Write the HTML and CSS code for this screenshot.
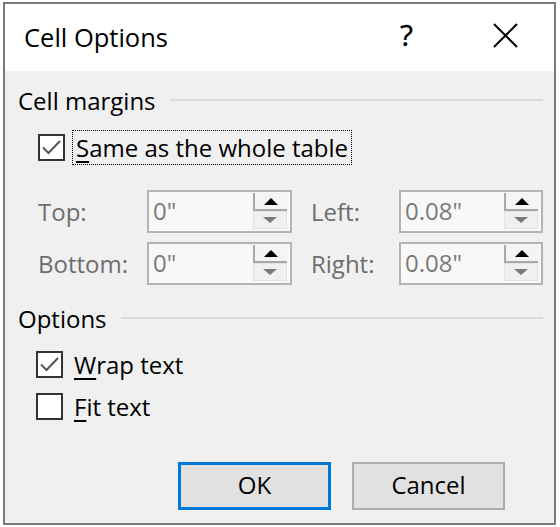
FILE: index.html
```html
<!DOCTYPE html>
<html>
<head>
<meta charset="utf-8">
<link rel="stylesheet" href="styles.css">
</head>
<body>
<div class="window">
  <div class="titlebar">
    <span class="title">Cell Options</span>
    <span class="help">?</span>
    <span class="close">
      <svg width="25" height="25" viewBox="0 0 25 25"><path d="M1 1 L24 24 M24 1 L1 24" stroke="#000" stroke-width="2" fill="none"/></svg>
    </span>
  </div>
  <div class="content">
    <div class="group-head"><span>Cell margins</span><div class="rule"></div></div>
    <div class="check-row first">
      <span class="box"><svg width="23" height="23" viewBox="0 0 23 23"><path d="M3 11.5 L8.5 17 L20 5" stroke="#555" stroke-width="2" fill="none"/></svg></span>
      <span class="check-label focus"><u>S</u>ame as the whole table</span>
    </div>
    <div class="spin-grid">
      <span class="lbl">Top:</span>
      <div class="spin"><span class="val">0"</span><div class="btns"><div class="up"><span class="tri-up"></span></div><div class="down"><span class="tri-down"></span></div></div></div>
      <span class="lbl lbl2">Left:</span>
      <div class="spin"><span class="val">0.08"</span><div class="btns"><div class="up"><span class="tri-up"></span></div><div class="down"><span class="tri-down"></span></div></div></div>
      <span class="lbl">Bottom:</span>
      <div class="spin"><span class="val">0"</span><div class="btns"><div class="up"><span class="tri-up"></span></div><div class="down"><span class="tri-down"></span></div></div></div>
      <span class="lbl lbl2">Right:</span>
      <div class="spin"><span class="val">0.08"</span><div class="btns"><div class="up"><span class="tri-up"></span></div><div class="down"><span class="tri-down"></span></div></div></div>
    </div>
    <div class="group-head second"><span>Options</span><div class="rule"></div></div>
    <div class="check-row wrap">
      <span class="box"><svg width="23" height="23" viewBox="0 0 23 23"><path d="M3 11.5 L8.5 17 L20 5" stroke="#555" stroke-width="2" fill="none"/></svg></span>
      <span class="check-label"><u>W</u>rap text</span>
    </div>
    <div class="check-row fit">
      <span class="box"></span>
      <span class="check-label"><u>F</u>it text</span>
    </div>
    <div class="buttons">
      <button class="btn default">OK</button>
      <button class="btn">Cancel</button>
    </div>
  </div>
</div>
</body>
</html>
```
FILE: styles.css
```css
html, body {
  margin: 0;
  padding: 0;
  background: #ffffff;
}
body {
  font-family: "Open Sans", "Noto Sans", sans-serif;
  font-size: 24px;
  color: #000;
}
.window {
  margin: 2px 0 0 3px;
  width: 553px;
  height: 523px;
  box-sizing: border-box;
  border: 2px solid #7a7a7a;
  display: flex;
  flex-direction: column;
  background: #f0f0f0;
}
.titlebar {
  height: 67px;
  background: #fff;
  display: flex;
  align-items: center;
  padding-left: 19px;
  flex-shrink: 0;
}
.title {
  font-size: 25.5px;
  flex: 1;
  margin-top: -2px;
}
.help {
  font-size: 30px;
  width: 93px;
  margin-top: -6px;
  -webkit-text-stroke: 0.4px #000;
}
.close {
  width: 25px;
  margin-right: 36px;
  display: flex;
  margin-top: -5px;
}
.content {
  flex: 1;
  display: flex;
  flex-direction: column;
  padding: 15px 11px 0 13px;
}
.group-head {
  display: flex;
  align-items: center;
  height: 30px;
  line-height: 30px;
}
.group-head span {
  padding-right: 14px;
}
.group-head .rule {
  flex: 1;
  height: 2px;
  background: #dcdcdc;
  margin-top: -2px;
}
.group-head.second {
  margin-top: 19px;
}
.check-row {
  display: flex;
  align-items: center;
  height: 36px;
  padding-left: 20px;
}
.check-row.first {
  margin-top: 13px;
  padding-left: 20px;
}
.check-row.wrap {
  margin-top: 12px;
  padding-left: 18px;
}
.check-row.fit {
  margin-top: 6px;
  padding-left: 18px;
}
.box {
  width: 27px;
  height: 27px;
  box-sizing: border-box;
  border: 2px solid #333;
  background: #fff;
  display: flex;
  align-items: center;
  justify-content: center;
  flex-shrink: 0;
}
.check-label {
  margin-left: 7px;
  line-height: 33px;
  padding: 0 3px;
  border: 1px solid transparent;
}
.check-label.focus {
  border: 1px dotted #000;
}
.check-label u {
  text-decoration-thickness: 2px;
  text-underline-offset: 4px;
}
.spin-grid {
  display: grid;
  grid-template-columns: 109px 145px 107px 144px;
  grid-auto-rows: 43px;
  row-gap: 9px;
  margin-top: 25px;
  padding-left: 20px;
  align-items: center;
}
.lbl {
  color: #6d6d6d;
}
.lbl2 {
  padding-left: 19px;
}
.spin {
  height: 43px;
  box-sizing: border-box;
  border: 2px solid #b4b4b4;
  background: #f8f8f8;
  display: flex;
  padding: 1px 3px 2px 0;
}
.val {
  flex: 1;
  color: #7a7a7a;
  padding-left: 4px;
  line-height: 36px;
}
.btns {
  width: 34px;
  display: flex;
  flex-direction: column;
}
.up {
  flex: 1;
  border-left: 2px solid #a8a8a8;
  border-bottom: 2px solid #a8a8a8;
  display: flex;
  align-items: center;
  justify-content: center;
  background: #f4f4f4;
}
.down {
  flex: 1;
  border: 1px solid #e2e2e2;
  display: flex;
  align-items: center;
  justify-content: center;
  background: #f0f0f0;
}
.tri-up {
  width: 0;
  height: 0;
  border-left: 7px solid transparent;
  border-right: 7px solid transparent;
  border-bottom: 7px solid #000;
}
.tri-down {
  width: 0;
  height: 0;
  border-left: 7px solid transparent;
  border-right: 7px solid transparent;
  border-top: 6px solid #7a7a7a;
}
.buttons {
  display: flex;
  justify-content: flex-end;
  gap: 21px;
  margin-top: 38px;
  padding-right: 38px;
}
.btn {
  width: 153px;
  height: 48px;
  box-sizing: border-box;
  font-family: "Open Sans", "Noto Sans", sans-serif;
  font-size: 24px;
  color: #000;
  background: #e1e1e1;
  border: 2px solid #adadad;
  padding: 0 0 3px 0;
}
.btn.default {
  border: 3px solid #0078d7;
}
```
